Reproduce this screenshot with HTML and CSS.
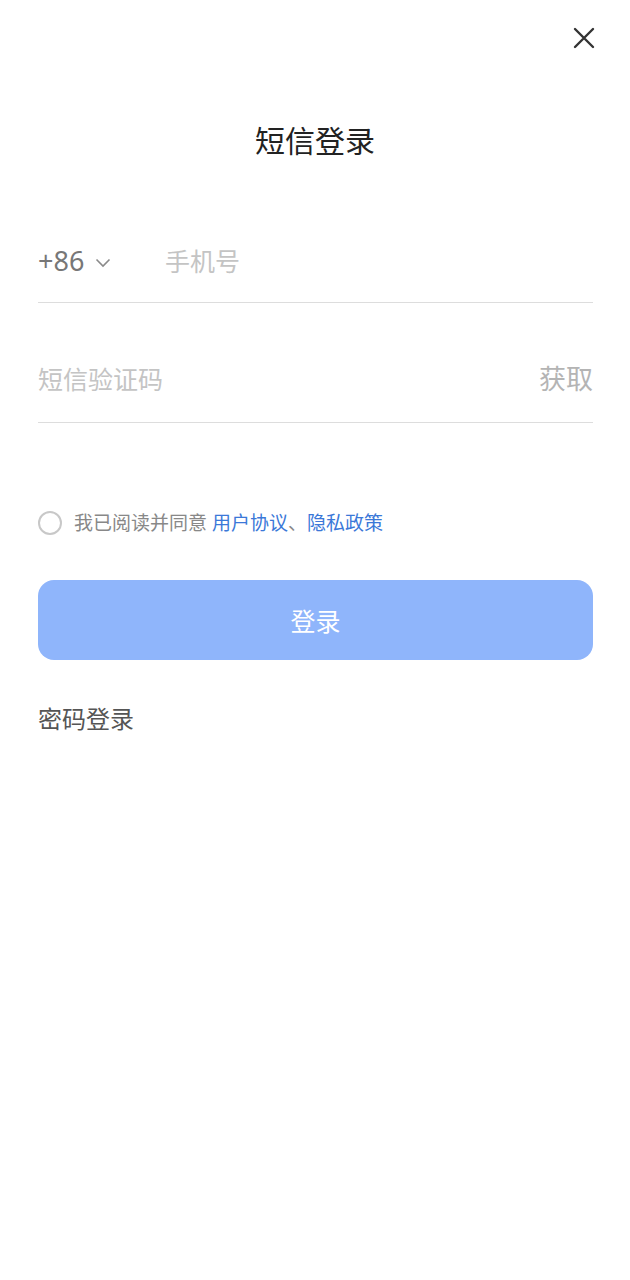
FILE: index.html
```html
<!DOCTYPE html>
<html lang="zh-CN">

<head>
    <meta charset="UTF-8" />
    <meta name="viewport" content="width=device-width, initial-scale=1.0" />
    <title>短信登录</title>

    <link rel="stylesheet" href="styles.css">
</head>

<body>
    <div class="topbar">
        <button class="closeBtn" aria-label="关闭">
            <svg width="22" height="22" viewBox="0 0 22 22">
                <path d="M2 2 L20 20 M20 2 L2 20" stroke="#333" stroke-width="2.4" stroke-linecap="round" fill="none" />
            </svg>
        </button>
    </div>

    <h1 class="title">短信登录</h1>

    <div class="container">
        <div class="field phoneRow">
            <div class="areaCode">+86
                <svg class="arrow" width="16" height="10" viewBox="0 0 16 10">
                    <path d="M1.5 1.5 L8 8 L14.5 1.5" stroke="#8a8a8a" stroke-width="1.6" fill="none" />
                </svg>
            </div>
            <span class="placeholder">手机号</span>
        </div>

        <div class="field codeRow">
            <span class="placeholder">短信验证码</span>
            <span class="getCode">获取</span>
        </div>

        <div class="agree">
            <span class="radio"></span>
            <span class="agreeText">我已阅读并同意 <a href="#">用户协议</a>、<a href="#">隐私政策</a></span>
        </div>

        <button class="loginBtn">登录</button>

        <div class="switchLogin">密码登录</div>
    </div>
</body>

</html>
```

FILE: styles.css
```css
body {
    margin: 0;
    background-color: #fff;
    font-family: "Noto Sans", "Noto Sans CJK SC", sans-serif;
}

.topbar {
    display: flex;
    justify-content: flex-end;
    padding: 27px 35px 0;
}

.closeBtn {
    background: none;
    border: none;
    padding: 0;
    width: 22px;
    height: 22px;
    cursor: pointer;
}

.closeBtn svg {
    display: block;
}

.title {
    margin: 72px 0 0;
    text-align: center;
    font-size: 30px;
    font-weight: normal;
    line-height: 40px;
    color: #222;
}

.container {
    padding: 0 37px 0 38px;
}

.field {
    display: flex;
    align-items: center;
    border-bottom: 1px solid #ddd;
    line-height: 40px;
}

.phoneRow {
    margin-top: 80px;
    padding-bottom: 21px;
}

.codeRow {
    justify-content: space-between;
    padding-top: 56px;
    padding-bottom: 23px;
}

.areaCode {
    display: flex;
    align-items: center;
    width: 127px;
    font-size: 27px;
    color: #777;
}

.arrow {
    margin-left: 11px;
    margin-top: 3px;
}

.placeholder {
    font-size: 25px;
    color: #c4c4c4;
}

.getCode {
    font-size: 27px;
    color: #b4b4b4;
}

.agree {
    display: flex;
    align-items: center;
    margin-top: 86px;
    line-height: 28px;
}

.radio {
    width: 20px;
    height: 20px;
    border: 2px solid #c8c8c8;
    border-radius: 50%;
    margin-right: 12px;
}

.agreeText {
    font-size: 19px;
    color: #888;
}

.agreeText a {
    color: #3b78d8;
    text-decoration: none;
}

.loginBtn {
    display: block;
    width: 100%;
    height: 80px;
    margin-top: 43px;
    background-color: #8fb5fb;
    color: #fff;
    border: none;
    border-radius: 16px;
    font-family: inherit;
    font-size: 25px;
    cursor: pointer;
}

.switchLogin {
    margin-top: 42px;
    font-size: 24px;
    line-height: 34px;
    color: #555;
}
```
